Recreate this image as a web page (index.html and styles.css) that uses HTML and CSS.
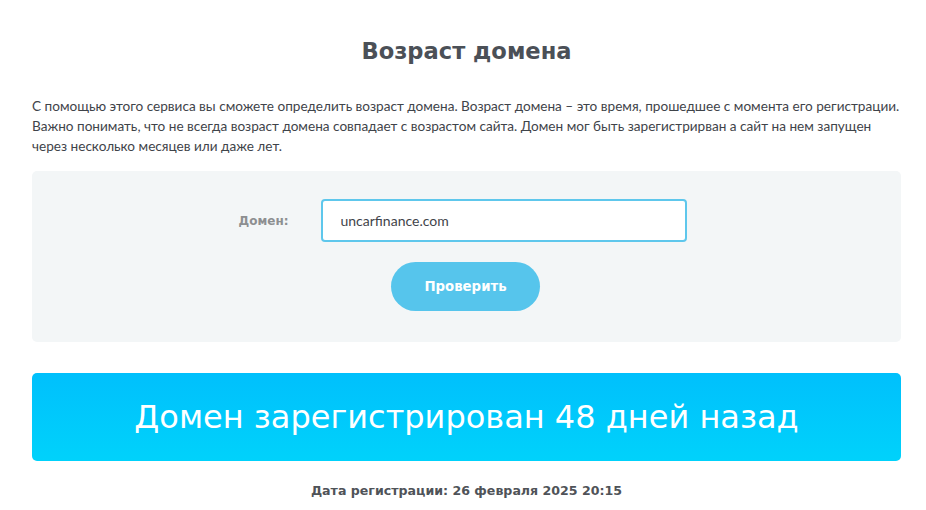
FILE: index.html
```html
<!DOCTYPE html>
<html lang="ru">
<head>
<meta charset="utf-8">
<title>Возраст домена</title>
<link rel="stylesheet" href="styles.css">
</head>
<body>
<main class="page">
  <h1 class="title">Возраст домена</h1>
  <p class="intro">С помощью этого сервиса вы сможете определить возраст домена. Возраст домена – это время, прошедшее с момента его регистрации. Важно понимать, что не всегда возраст домена совпадает с возрастом сайта. Домен мог быть зарегистрирван а сайт на нем запущен через несколько месяцев или даже лет.</p>
  <form class="check-box">
    <div class="field-row">
      <label class="field-label" for="domain">Домен:</label>
      <input class="field-input" id="domain" type="text" value="uncarfinance.com">
    </div>
    <button class="check-btn" type="button">Проверить</button>
  </form>
  <div class="result-banner">Домен зарегистрирован 48 дней назад</div>
  <p class="reg-date">Дата регистрации: 26 февраля 2025 20:15</p>
</main>
</body>
</html>
```
FILE: styles.css
```css
* { box-sizing: border-box; }
html, body { margin: 0; padding: 0; background: #fff; }
body { font-family: "Open Sans", "DejaVu Sans", sans-serif; color: #4a4f55; }
.page { width: 869px; margin: 0 0 0 32px; padding-top: 36px; }
.title {
  margin: 0;
  text-align: center;
  font-family: "DejaVu Sans", sans-serif;
  font-weight: bold;
  font-size: 22.6px;
  line-height: 30px;
  color: #4b5057;
}
.intro {
  margin: 30px 0 0;
  font-family: "Lato", sans-serif;
  font-size: 13.6px;
  line-height: 20px;
  color: #3f444a;
}
.check-box {
  margin-top: 15px;
  background: #f3f6f7;
  border-radius: 5px;
  height: 171px;
  padding-top: 28px;
  display: flex;
  flex-direction: column;
  align-items: center;
}
.field-row { display: flex; align-items: center; margin-left: -8px; }
.field-label {
  width: 82px;
  font-family: "DejaVu Sans", sans-serif;
  font-weight: bold;
  font-size: 12px;
  color: #8d8f91;
}
.field-input {
  width: 366px;
  height: 43px;
  border: 2px solid #5ec7ec;
  border-radius: 4px;
  padding: 0 18px;
  font-family: "Lato", sans-serif;
  font-size: 14px;
  color: #3f444a;
  background: #fff;
  outline: none;
}
.check-btn {
  margin-top: 20px;
  margin-left: -2px;
  width: 149px;
  height: 49px;
  border: 0;
  border-radius: 25px;
  background: #56c5ec;
  color: #fff;
  font-family: "DejaVu Sans", sans-serif;
  font-weight: bold;
  font-size: 13.3px;
}
.result-banner {
  margin-top: 31px;
  height: 88px;
  border-radius: 5px;
  background: linear-gradient(#00c0fc, #00d2fb);
  color: #fff;
  display: flex;
  align-items: center;
  justify-content: center;
  font-family: "DejaVu Sans", sans-serif;
  font-size: 32px;
  font-weight: 400;
}
.reg-date {
  margin: 22px 0 0;
  text-align: center;
  font-family: "DejaVu Sans", sans-serif;
  font-weight: bold;
  font-size: 12.6px;
  color: #4f5358;
}
```
